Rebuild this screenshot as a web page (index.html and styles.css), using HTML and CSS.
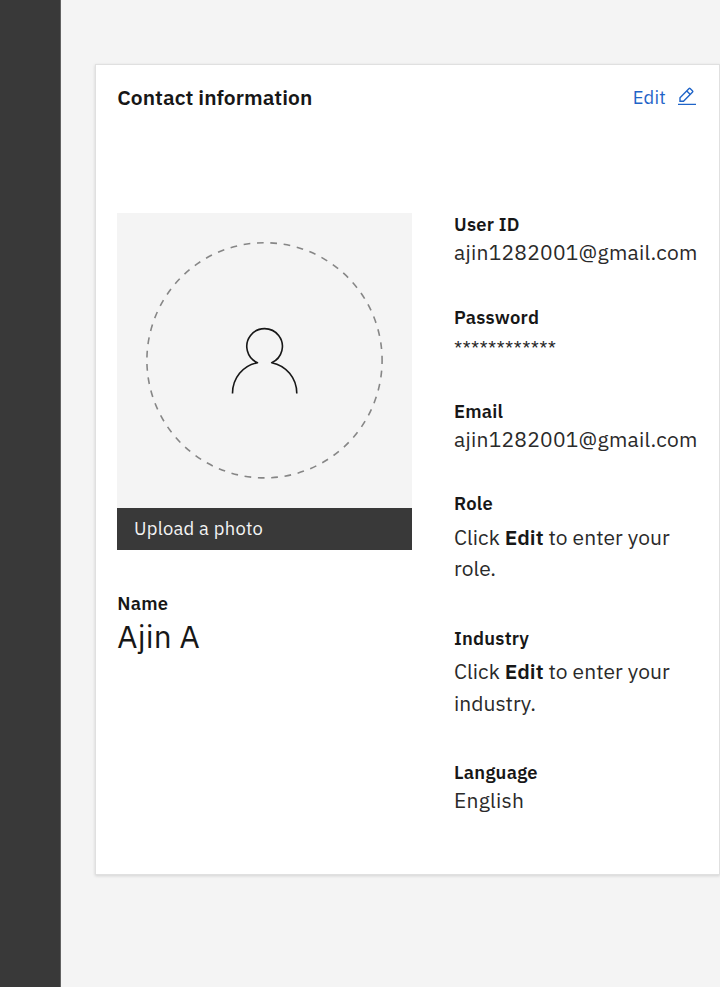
FILE: index.html
```html
<!DOCTYPE html>
<html lang="en">
<head>
<meta charset="utf-8">
<title>Contact information</title>
<link rel="stylesheet" href="styles.css">
</head>
<body>
<div class="page">
  <aside class="rail"></aside>
  <main class="main">
    <section class="card">
      <header class="card-header">
        <h1 class="title">Contact information</h1>
        <a class="edit">Edit
          <svg class="edit-icon" width="20" height="20" viewBox="0 0 20 20" fill="none" stroke="currentColor" stroke-width="1.4">
            <path d="M1 17.4H19M3 14.2V10.7L12.1 1.6Q12.6 1.1 13.1 1.6L15.6 4.1Q16.1 4.6 15.6 5.1L6.5 14.2ZM9.8 3.9L13.3 7.4"/>
          </svg>
        </a>
      </header>
      <div class="columns">
        <div class="profile">
          <div class="photo">
            <svg width="295" height="295" viewBox="0 0 295 295" fill="none">
              <circle class="ring" cx="147.5" cy="147.3" r="117.6"/>
              <path class="person" d="M115.5 180.5C115.5 165 126 152.5 140.5 149.7A17.8 17.8 0 1 1 154.7 149.7C169 152.5 179.8 165 179.8 180.5"/>
            </svg>
          </div>
          <div class="upload">Upload a photo</div>
          <div class="label name-label">Name</div>
          <div class="name">Ajin A</div>
        </div>
        <div class="details">
          <div class="field f-user"><div class="label">User ID</div><div class="value mail">ajin1282001@gmail.com</div></div>
          <div class="field f-password"><div class="label">Password</div><div class="value stars">************</div></div>
          <div class="field f-email"><div class="label">Email</div><div class="value mail">ajin1282001@gmail.com</div></div>
          <div class="field f-role"><div class="label">Role</div><div class="value prompt prompt-role">Click <b>Edit</b> to enter your<br>role.</div></div>
          <div class="field f-industry"><div class="label">Industry</div><div class="value prompt">Click <b>Edit</b> to enter your<br>industry.</div></div>
          <div class="field"><div class="label">Language</div><div class="value english">English</div></div>
        </div>
      </div>
    </section>
  </main>
</div>
</body>
</html>
```
FILE: styles.css
```css
* { box-sizing: border-box; }
body { margin: 0; background: #f4f4f4; color: #171717; font-family: "IBM Plex Sans", Roboto, sans-serif; }
.page { display: flex; height: 987px; overflow: hidden; }
.rail { width: 61px; flex: none; background: #393939; border-right: 1px solid #626262; }
.main { flex: 1; min-width: 0; padding: 64px 0 0 34px; }
.card { height: 811px; padding: 0 22px 0 21px; background: #fff; border: 1px solid #e0e0e0; box-shadow: 0 1px 3px rgba(0,0,0,.14); }
.card-header { display: flex; justify-content: space-between; height: 148px; padding-top: 16px; }
.title { margin: 0; padding-left: .3px; font-size: 21px; line-height: 32px; font-weight: 600; letter-spacing: .03px; }
.edit { display: flex; gap: 11px; font-size: 18.4px; line-height: 32px; color: #1f64c8; letter-spacing: .24px; }
.edit-icon { margin-top: 6px; }
.columns { display: flex; gap: 42px; }
.profile { width: 295px; flex: none; }
.photo { height: 295px; background: #f4f4f4; }
.photo svg { display: block; }
.ring { stroke: #868686; stroke-width: 1.6; stroke-dasharray: 6.7 6.7; stroke-dashoffset: 3; }
.person { stroke: #171717; stroke-width: 1.6; stroke-linejoin: round; }
.upload { height: 42px; padding-left: 17px; background: #393939; color: #f4f4f4; font-size: 18.4px; line-height: 40px; letter-spacing: .26px; }
.label { margin-top: -1px; font-size: 18.4px; line-height: 25px; font-weight: 600; letter-spacing: .23px; }
.name-label { margin-top: 41px; padding-left: .3px; }
.name { padding-left: .3px; font-size: 31.5px; line-height: 42px; letter-spacing: .2px; }
.details { flex: 1; min-width: 0; white-space: nowrap; }
.value { margin-top: -1px; color: #2a2a2a; font-size: 21px; line-height: 32px; font-weight: 400; }
.mail, .english { letter-spacing: .25px; }
.value b { color: #171717; font-weight: 600; }
.prompt { margin-top: 5px; line-height: 31.5px; letter-spacing: .03px; }
.prompt-role { margin-top: 6px; line-height: 31px; }
.field { display: flow-root; }
.f-user { height: 93px; }
.f-password { height: 94px; }
.f-email { height: 92px; }
.f-role { height: 135px; }
.f-industry { height: 134px; }
.stars { padding-top: 3px; font-size: 18.4px; letter-spacing: .24px; }
```
